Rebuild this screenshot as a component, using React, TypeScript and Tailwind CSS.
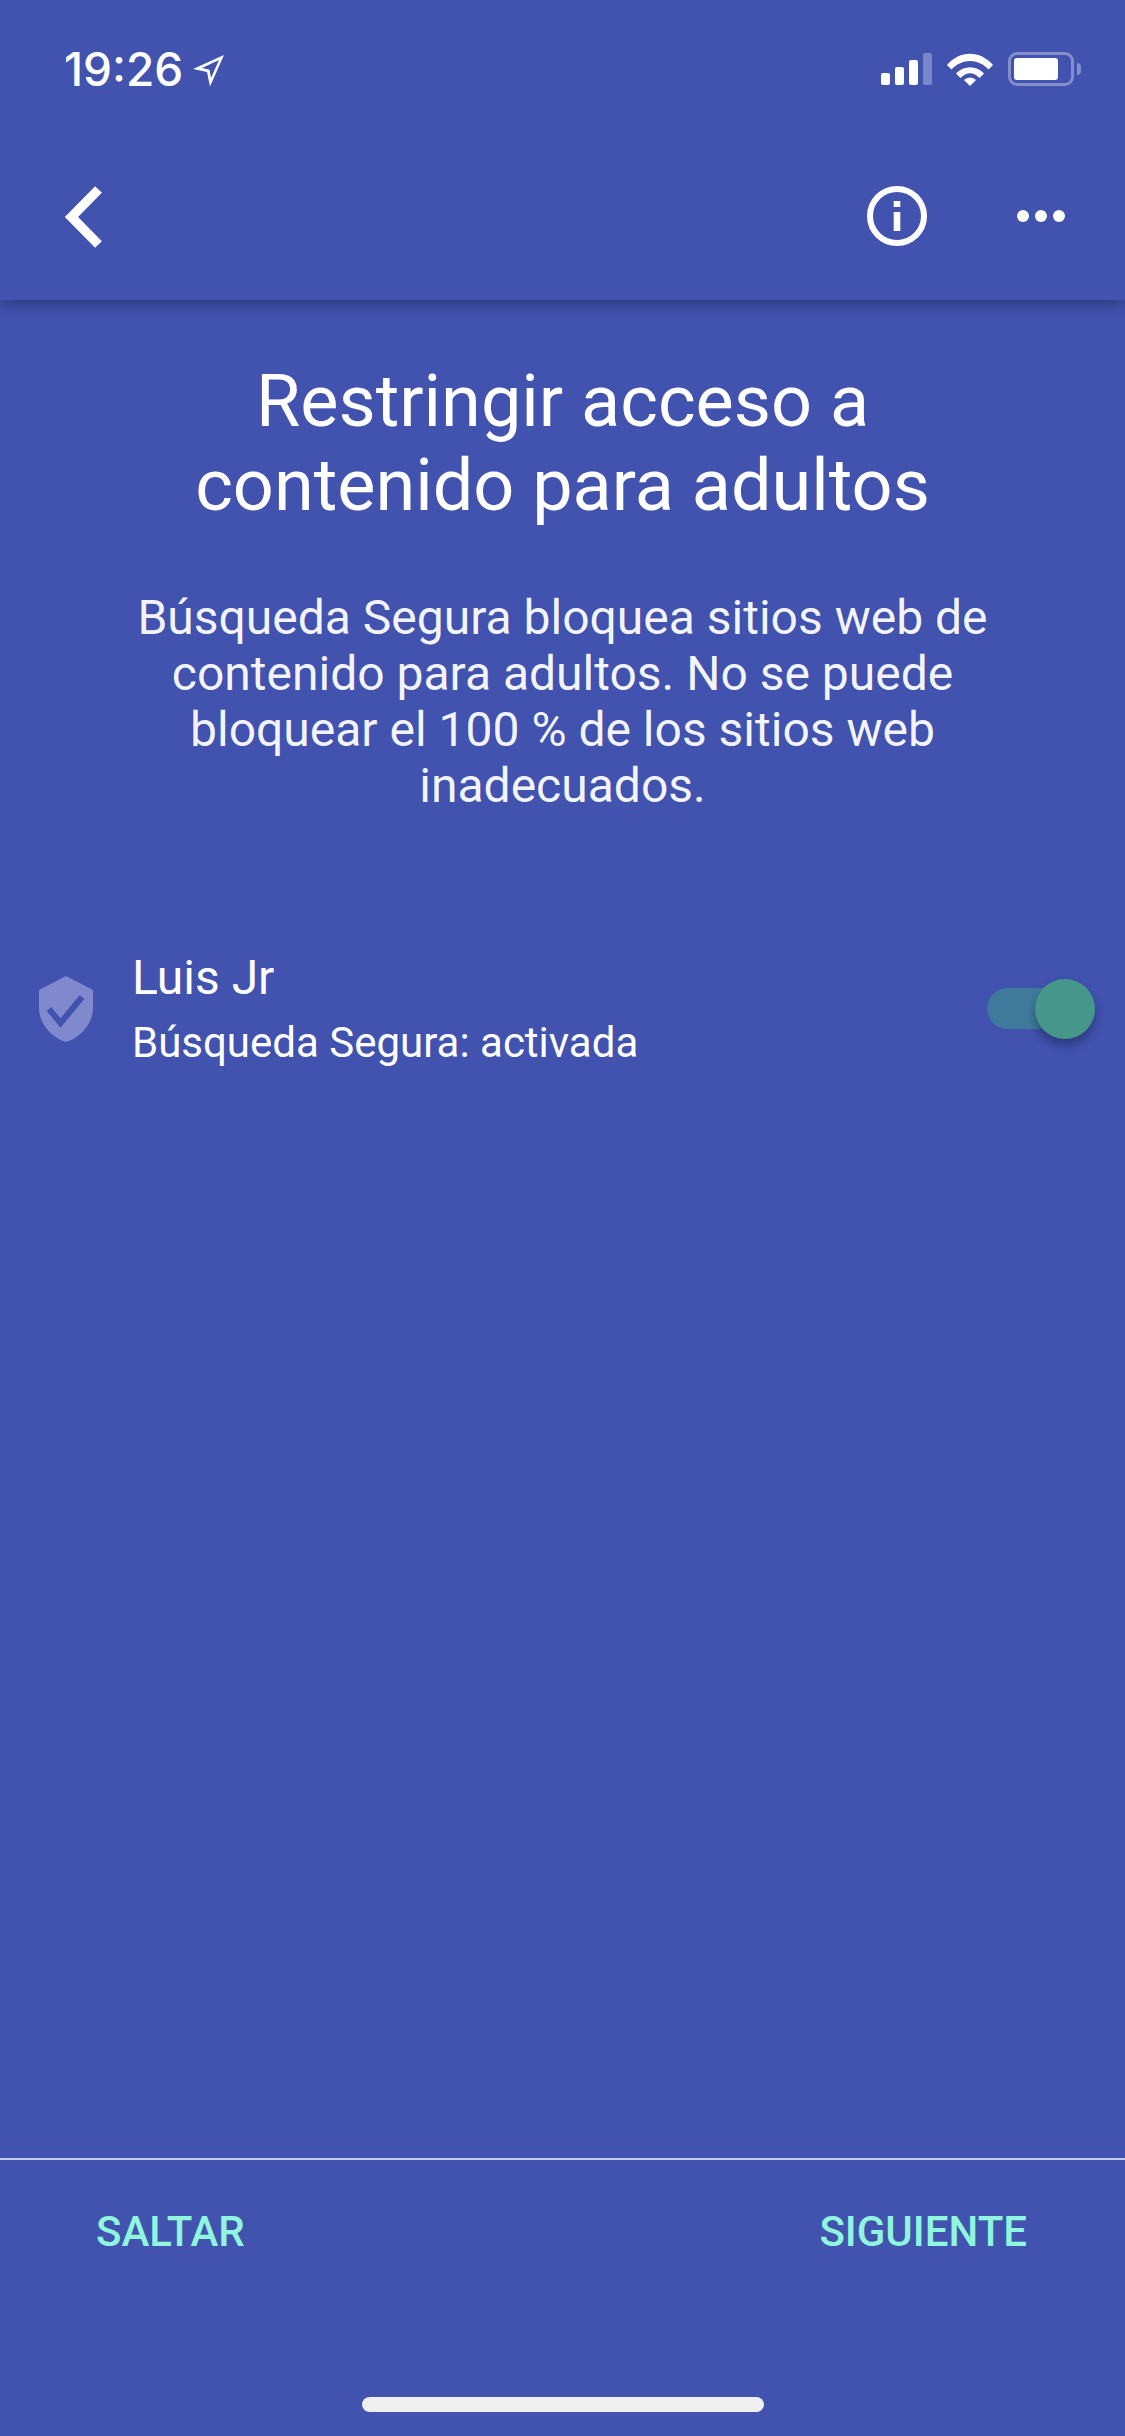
const BG = "bg-[#4152af]";

function StatusBar() {
  return (
    <div className="flex h-[132px] items-start justify-between pl-[64px] pr-[44px] pt-[44px]">
      <div className="flex items-center">
        <span className="font-['Inter',sans-serif] text-[46px] leading-[50px] font-medium text-white">19:26</span>
        <svg width="32" height="32" viewBox="0 0 32 32" className="ml-[10px] mt-[4px]">
          <path d="M31 0 L0 14 L14 17 L17 31.5 Z M26 5 L9 13 L16.5 14.8 L18 23 Z" fill="#fff" fillRule="evenodd" />
        </svg>
      </div>
      <div className="flex items-center pt-[8px]">
        <div className="flex items-end gap-[5px]">
          <div className="h-[12px] w-[9px] rounded-[2px] bg-white" />
          <div className="h-[18px] w-[9px] rounded-[2px] bg-white" />
          <div className="h-[25px] w-[9px] rounded-[2px] bg-white" />
          <div className="h-[32px] w-[9px] rounded-[2px] bg-white/30" />
        </div>
        <svg width="46" height="33" viewBox="0 0 46 33" className="ml-[15px]">
          <path d="M0 12 C13 -3 33 -3 46 12 L41.5 16.5 C31 5 15 5 4.5 16.5 Z" fill="#fff" />
          <path d="M9 20.5 C17 12 29 12 37 20.5 L32.5 25 C26.5 18.5 19.5 18.5 13.5 25 Z" fill="#fff" />
          <path d="M17 27 C20.5 23.5 25.5 23.5 29 27 L23 33 Z" fill="#fff" />
        </svg>
        <div className="ml-[15px] flex items-center">
          <div className="flex h-[34px] w-[66px] items-center rounded-[9px] border-[3px] border-white/35 p-[3px]">
            <div className="h-[22px] w-[44px] rounded-[3px] bg-white" />
          </div>
          <div className="ml-[3px] h-[12px] w-[4px] rounded-r-full bg-white/35" />
        </div>
      </div>
    </div>
  );
}

function Header() {
  return (
    <div className="flex h-[168px] items-start justify-between pl-[64px] pr-[60px] pt-[54px]">
      <svg width="42" height="62" viewBox="0 0 42 62">
        <path d="M34.5 3.5 L7.5 31 L34.5 58.5" fill="none" stroke="#fff" strokeWidth="9.5" />
      </svg>
      <div className="flex h-[60px] items-center gap-[90px]">
        <svg width="60" height="60" viewBox="0 0 60 60">
          <circle cx="30" cy="30" r="27" fill="none" stroke="#fff" strokeWidth="6" />
          <rect x="26.7" y="15" width="6.6" height="6" fill="#fff" />
          <rect x="26.7" y="26" width="6.6" height="19" fill="#fff" />
        </svg>
        <div className="flex gap-[6px]">
          <div className="size-[12px] rounded-full bg-white" />
          <div className="size-[12px] rounded-full bg-white" />
          <div className="size-[12px] rounded-full bg-white" />
        </div>
      </div>
    </div>
  );
}

function ProfileRow() {
  return (
    <div className="mt-[136px] flex items-center pl-[39px] pr-[30px]">
      <svg width="54" height="66" viewBox="0 0 54 66" className="shrink-0">
        <path d="M27 0 L54 14 V32 C54 48 41 62 27 66 C13 62 0 48 0 32 V14 Z" fill="#8089ce" />
        <path d="M10 33 L21.5 47 L43 21" fill="none" stroke="#4152af" strokeWidth="6" />
      </svg>
      <div className="ml-[39px] flex-1">
        <div className="text-[48px] leading-[56px] text-white">Luis Jr</div>
        <div className="mt-[13px] text-[42px] leading-[48px] text-white">Búsqueda Segura: activada</div>
      </div>
      <div className="relative h-[60px] w-[108px] shrink-0">
        <div className="absolute left-0 top-[9px] h-[41px] w-[80px] rounded-full bg-[#3f7a9d]" />
        <div className="absolute right-0 top-0 size-[60px] rounded-full bg-[#45978c] shadow-[0_6px_10px_rgba(0,0,0,0.3)]" />
      </div>
    </div>
  );
}

export default function App() {
  return (
    <div className={`flex h-[2436px] w-[1125px] flex-col ${BG} font-['Roboto',sans-serif]`}>
      <div className={`relative z-10 ${BG} shadow-[0_4px_14px_rgba(0,0,0,0.3)]`}>
        <StatusBar />
        <Header />
      </div>
      <main className="flex-1">
        <h1 className="mt-[60px] text-center text-[72px] leading-[84px] font-normal text-white">
          Restringir acceso a<br />contenido para adultos
        </h1>
        <p className="mt-[62px] px-[50px] text-center text-[48px] leading-[56px] text-white/95">
          Búsqueda Segura bloquea sitios web de<br />contenido para adultos. No se puede<br />bloquear el 100 % de los sitios web<br />inadecuados.
        </p>
        <ProfileRow />
      </main>
      <footer className="h-[278px] border-t-[2px] border-white/70">
        <div className="flex justify-between pl-[96px] pr-[98px] pt-[48px] text-[42px] leading-[48px] font-medium text-[#8ff5dc]">
          <span>SALTAR</span>
          <span>SIGUIENTE</span>
        </div>
        <div className="mx-auto mt-[141px] h-[15px] w-[402px] rounded-full bg-[#efefef]" />
      </footer>
    </div>
  );
}
